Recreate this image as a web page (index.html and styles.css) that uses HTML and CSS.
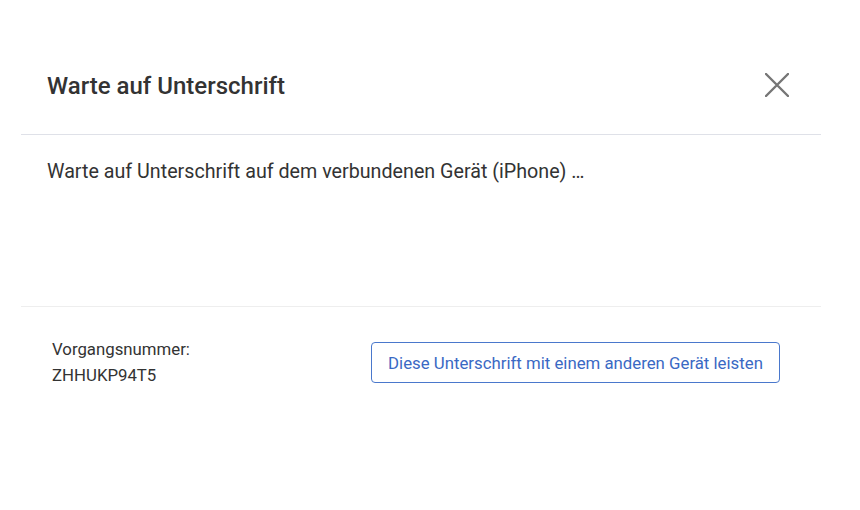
FILE: index.html
```html
<!DOCTYPE html>
<html lang="de">
<head>
<meta charset="utf-8">
<title>Warte auf Unterschrift</title>
<link rel="stylesheet" href="styles.css">
</head>
<body>
<div class="dialog">
  <div class="dialog-header">
    <h2 class="dialog-title">Warte auf Unterschrift</h2>
    <button class="close-btn" aria-label="Schließen">
      <svg width="24" height="24" viewBox="0 0 24 24"><path d="M1 1 L23 23 M23 1 L1 23" stroke="#767676" stroke-width="2.4" stroke-linecap="round" fill="none"/></svg>
    </button>
  </div>
  <div class="dialog-body">
    <p class="status-text">Warte auf Unterschrift auf dem verbundenen Gerät (iPhone) …</p>
  </div>
  <div class="dialog-footer">
    <div class="ref">
      <div>Vorgangsnummer:</div>
      <div>ZHHUKP94T5</div>
    </div>
    <button class="alt-btn">Diese Unterschrift mit einem anderen Gerät leisten</button>
  </div>
</div>
</body>
</html>
```

FILE: styles.css
```css
html, body {
  margin: 0;
  padding: 0;
  background: #ffffff;
}
body {
  font-family: Roboto, "Liberation Sans", Arial, sans-serif;
  color: #333333;
}
.dialog {
  margin-left: 21px;
  width: 800px;
  padding-top: 62px;
}
.dialog-header {
  display: flex;
  align-items: center;
  justify-content: space-between;
  padding: 0 20px 24px 26px;
  border-bottom: 1px solid #dfe1e8;
}
.dialog-title {
  margin: 0;
  font-size: 24px;
  font-weight: 500;
  color: #333333;
  line-height: 48px;
}
.close-btn {
  width: 48px;
  height: 48px;
  border: 0;
  background: none;
  padding: 0;
  display: flex;
  align-items: center;
  justify-content: center;
  cursor: pointer;
}
.close-btn svg {
  margin-top: -2px;
}
.dialog-body {
  height: 172px;
  box-sizing: border-box;
  padding: 25px 26px 0;
  border-bottom: 1px solid #eeeeee;
}
.status-text {
  margin: 0;
  font-size: 19.7px;
  line-height: 24px;
  color: #333333;
}
.dialog-footer {
  display: flex;
  align-items: flex-start;
  justify-content: space-between;
  padding: 29px 41px 0 31px;
}
.ref {
  font-size: 16.8px;
  line-height: 26px;
  color: #333333;
}
.alt-btn {
  margin-top: 6px;
  width: 409px;
  height: 41px;
  border: 1px solid #4a78cc;
  border-radius: 4px;
  background: #ffffff;
  color: #3a69c4;
  font-family: Roboto, "Liberation Sans", Arial, sans-serif;
  font-size: 16.8px;
  padding: 0 12px;
  cursor: pointer;
}
```
